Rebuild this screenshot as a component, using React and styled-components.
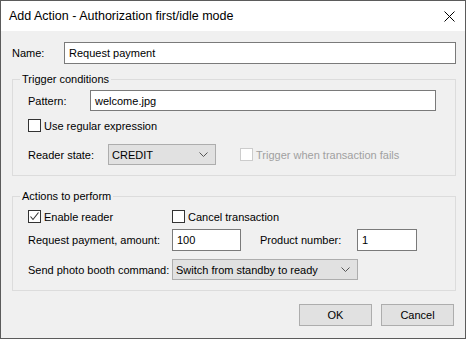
import React from "react";
import styled, { createGlobalStyle } from "styled-components";

const GlobalStyle = createGlobalStyle`
  html, body {
    margin: 0;
    padding: 0;
    background: #ffffff;
  }
  * {
    box-sizing: border-box;
  }
`;

const Window = styled.div`
  width: 466px;
  height: 339px;
  border: 1px solid #5b5b5b;
  background: #f0f0f0;
  display: flex;
  flex-direction: column;
  font-family: "Liberation Sans", Arial, sans-serif;
  font-size: 11px;
  color: #000000;
`;

const TitleBar = styled.div`
  height: 30px;
  background: #ffffff;
  display: flex;
  align-items: center;
  justify-content: space-between;
  padding: 0 10px 0 8px;
  font-size: 12.5px;
`;

const CloseIcon = styled.svg`
  width: 11px;
  height: 11px;
  display: block;
`;

const Content = styled.div`
  padding: 11px 9px 0 11px;
  display: flex;
  flex-direction: column;
`;

const Row = styled.div`
  display: flex;
  align-items: center;
  height: ${(p) => p.$h || 21}px;
  margin-top: ${(p) => p.$mt || 0}px;
`;

const Label = styled.div`
  width: ${(p) => p.$w}px;
  padding-left: ${(p) => p.$pl || 0}px;
  flex-shrink: 0;
  white-space: nowrap;
`;

const TextBox = styled.div`
  width: ${(p) => p.$w}px;
  height: ${(p) => p.$h || 22}px;
  background: #ffffff;
  border: 1px solid #7a7a7a;
  padding: 0 4px;
  display: flex;
  align-items: center;
  flex-shrink: 0;
`;

const Group = styled.div`
  position: relative;
  border: 1px solid #dcdcdc;
  margin-top: ${(p) => p.$mt}px;
  padding: ${(p) => p.$pad};
  display: flex;
  flex-direction: column;
`;

const Legend = styled.span`
  position: absolute;
  top: -8px;
  left: 7px;
  padding: 0 2px;
  background: #f0f0f0;
  line-height: 15px;
`;

const Combo = styled.div`
  width: ${(p) => p.$w}px;
  height: 21px;
  background: #e1e1e1;
  border: 1px solid #adadad;
  display: flex;
  align-items: center;
  justify-content: space-between;
  padding: 0 7px 0 3px;
  flex-shrink: 0;
`;

const Chevron = styled.svg`
  width: 9px;
  height: 5px;
  display: block;
`;

const CheckLabel = styled.div`
  display: flex;
  align-items: center;
  gap: 3px;
  width: ${(p) => (p.$w ? `${p.$w}px` : "auto")};
  color: ${(p) => (p.$disabled ? "#a0a0a0" : "#000000")};
  white-space: nowrap;
  flex-shrink: 0;
`;

const Box = styled.div`
  width: 13px;
  height: 13px;
  background: #ffffff;
  border: 1px solid ${(p) => (p.$disabled ? "#cccccc" : "#333333")};
  display: flex;
  align-items: center;
  justify-content: center;
`;

const Spacer = styled.div`
  width: ${(p) => p.$w}px;
  flex-shrink: 0;
`;

const ButtonBar = styled.div`
  display: flex;
  justify-content: flex-end;
  gap: 9px;
  margin-top: 13px;
  padding-right: 2px;
`;

const Button = styled.div`
  width: 73px;
  height: 22px;
  background: #e1e1e1;
  border: 1px solid #adadad;
  display: flex;
  align-items: center;
  justify-content: center;
`;

const Checkbox = ({ checked, disabled, children, w }) => (
  <CheckLabel $w={w} $disabled={disabled}>
    <Box $disabled={disabled}>
      {checked && (
        <svg width="11" height="11" viewBox="0 0 11 11">
          <path d="M1.5 5.5 L4 8.5 L9.5 1.5" fill="none" stroke="#333" strokeWidth="1.1" />
        </svg>
      )}
    </Box>
    {children}
  </CheckLabel>
);

const Select = ({ w, children }) => (
  <Combo $w={w}>
    <span>{children}</span>
    <Chevron viewBox="0 0 9 5">
      <path d="M0.5 0.5 L4.5 4.5 L8.5 0.5" fill="none" stroke="#555" strokeWidth="1" />
    </Chevron>
  </Combo>
);

export default function App() {
  return (
    <>
      <GlobalStyle />
      <Window>
        <TitleBar>
          <span>Add Action - Authorization first/idle mode</span>
          <CloseIcon viewBox="0 0 11 11">
            <path d="M0.5 0.5 L10.5 10.5 M10.5 0.5 L0.5 10.5" stroke="#000" strokeWidth="1" />
          </CloseIcon>
        </TitleBar>
        <Content>
          <Row $h={22}>
            <Label $w={52}>Name:</Label>
            <TextBox $w={392}>Request payment</TextBox>
          </Row>

          <Group $mt={15} $pad="10px 18px 10px 15px">
            <Legend>Trigger conditions</Legend>
            <Row $h={21}>
              <Label $w={62}>Pattern:</Label>
              <TextBox $w={346} $h={21}>welcome.jpg</TextBox>
            </Row>
            <Row $h={13} $mt={8}>
              <Checkbox>Use regular expression</Checkbox>
            </Row>
            <Row $h={21} $mt={12}>
              <Label $w={80}>Reader state:</Label>
              <Select w={108}>CREDIT</Select>
              <Spacer $w={24} />
              <Checkbox disabled>Trigger when transaction fails</Checkbox>
            </Row>
          </Group>

          <Group $mt={20} $pad="13px 18px 10px 15px">
            <Legend>Actions to perform</Legend>
            <Row $h={13}>
              <Checkbox checked w={144}>Enable reader</Checkbox>
              <Checkbox>Cancel transaction</Checkbox>
            </Row>
            <Row $h={22} $mt={6}>
              <Label $w={144}>Request payment, amount:</Label>
              <TextBox $w={69}>100</TextBox>
              <Label $w={116} $pl={19}>Product number:</Label>
              <TextBox $w={60}>1</TextBox>
            </Row>
            <Row $h={21} $mt={8}>
              <Label $w={144}>Send photo booth command:</Label>
              <Select w={186}>Switch from standby to ready</Select>
            </Row>
          </Group>

          <ButtonBar>
            <Button>OK</Button>
            <Button>Cancel</Button>
          </ButtonBar>
        </Content>
      </Window>
    </>
  );
}
